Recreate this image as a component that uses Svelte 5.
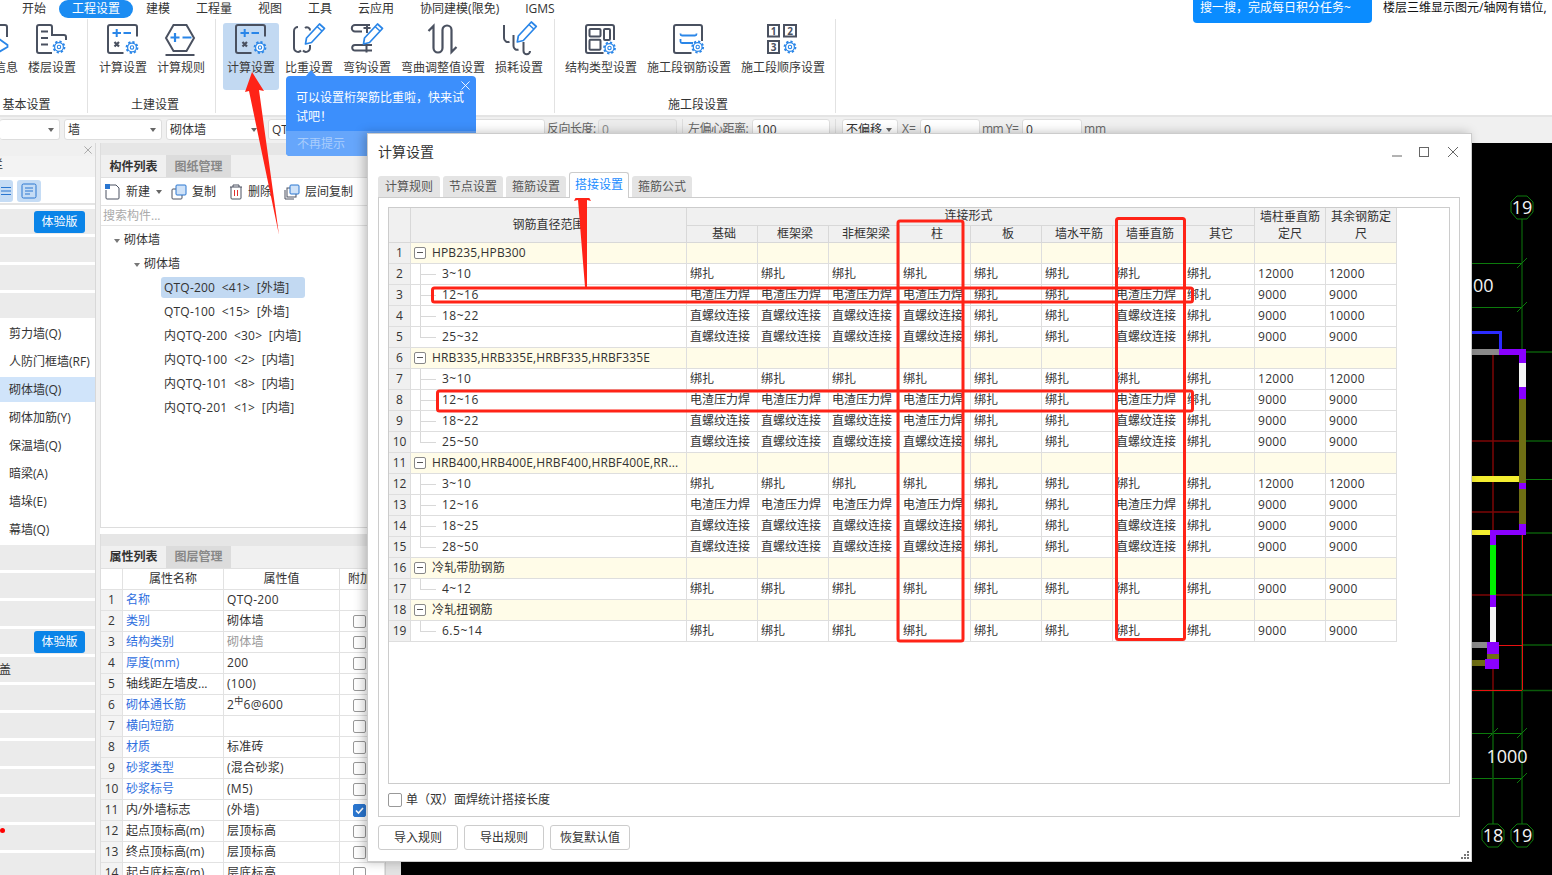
<script lang="ts">
  const menus = ['开始', '工程设置', '建模', '工程量', '视图', '工具', '云应用', '协同建模(限免)', 'IGMS'];

  const leftTop = ['trial', '', '', ''];
  const leftNames = ['剪力墙(Q)', '人防门框墙(RF)', '砌体墙(Q)', '砌体加筋(Y)', '保温墙(Q)', '暗梁(A)', '墙垛(E)', '幕墙(Q)'];
  const leftBottom = ['', '', '', 'trial', 'cover', '', '', '', '', '', 'dot', ''];

  const tree = [
    'QTQ-200  <41>  [外墙]',
    'QTQ-100  <15>  [外墙]',
    '内QTQ-200  <30>  [内墙]',
    '内QTQ-100  <2>  [内墙]',
    '内QTQ-101  <8>  [内墙]',
    '内QTQ-201  <1>  [内墙]',
  ];

  const props = [
    { name: '名称', val: 'QTQ-200', link: true, nobox: true },
    { name: '类别', val: '砌体墙', link: true },
    { name: '结构类别', val: '砌体墙', link: true, muted: true },
    { name: '厚度(mm)', val: '200', link: true },
    { name: '轴线距左墙皮...', val: '(100)' },
    { name: '砌体通长筋', val: '2', steel: true, link: true },
    { name: '横向短筋', val: '', link: true },
    { name: '材质', val: '标准砖', link: true },
    { name: '砂浆类型', val: '(混合砂浆)', link: true },
    { name: '砂浆标号', val: '(M5)', link: true },
    { name: '内/外墙标志', val: '(外墙)', checked: true },
    { name: '起点顶标高(m)', val: '层顶标高' },
    { name: '终点顶标高(m)', val: '层顶标高' },
    { name: '起点底标高(m)', val: '层底标高' },
  ];

  const heads = ['基础', '框架梁', '非框架梁', '柱', '板', '墙水平筋', '墙垂直筋', '其它'];
  const T = '绑扎';
  const E = '电渣压力焊';
  const S = '直螺纹连接';
  const allTie = [T, T, T, T, T, T, T, T];
  const weld = [E, E, E, E, T, T, E, T];
  const screw = [S, S, S, S, T, T, S, T];

  const rows: any[] = [
    { group: 'HPB235,HPB300' },
    { label: '3~10', c: allTie, a: 12000, b: 12000 },
    { label: '12~16', c: weld, a: 9000, b: 9000 },
    { label: '18~22', c: screw, a: 9000, b: 10000 },
    { label: '25~32', c: screw, a: 9000, b: 9000, last: true },
    { group: 'HRB335,HRB335E,HRBF335,HRBF335E' },
    { label: '3~10', c: allTie, a: 12000, b: 12000 },
    { label: '12~16', c: weld, a: 9000, b: 9000 },
    { label: '18~22', c: [S, S, S, E, T, T, S, T], a: 9000, b: 9000 },
    { label: '25~50', c: screw, a: 9000, b: 9000, last: true },
    { group: 'HRB400,HRB400E,HRBF400,HRBF400E,RR...' },
    { label: '3~10', c: allTie, a: 12000, b: 12000 },
    { label: '12~16', c: weld, a: 9000, b: 9000 },
    { label: '18~25', c: screw, a: 9000, b: 9000 },
    { label: '28~50', c: screw, a: 9000, b: 9000, last: true },
    { group: '冷轧带肋钢筋' },
    { label: '4~12', c: allTie, a: 9000, b: 9000, last: true },
    { group: '冷轧扭钢筋' },
    { label: '6.5~14', c: allTie, a: 9000, b: 9000, last: true },
  ];

  const dialogTabs = ['计算规则', '节点设置', '箍筋设置', '搭接设置', '箍筋公式'];
</script>

{#snippet gear(x, y)}
  <circle cx={x} cy={y} r="5.4" fill="none" stroke="#2a86e8" stroke-width="2" stroke-dasharray="2.2 2" />
  <circle cx={x} cy={y} r="4.400" fill="#fff" stroke="#2a86e8" stroke-width="1.200" />
  <circle cx={x} cy={y} r="1.700" fill="none" stroke="#2a86e8" stroke-width="1.100" />
{/snippet}

{#snippet pencil(x, y)}
  <path d="M{x} {y}l1-6 13-14 5 4.500-13 14z" fill="#fff" stroke="#2a86e8" stroke-width="1.700" stroke-linejoin="round" />
  <path d="M{x + 11.500} {y - 17.500}l5 4.500" stroke="#2a86e8" stroke-width="1.500" fill="none" />
{/snippet}

{#snippet iconInfo()}
  <svg viewBox="0 0 32 34" class="ico">
    <path d="M20 1h7a2 2 0 0 1 2 2v10" class="ln" />
    <path d="M21 15l8.500 6v2L21 28" fill="none" stroke="#2a86e8" stroke-width="1.800" />
  </svg>
{/snippet}

{#snippet iconFloor()}
  <svg viewBox="0 0 32 34" class="ico">
    <path d="M16 29H3a2 2 0 0 1-2-2V3a2 2 0 0 1 2-2h11a2 2 0 0 1 2 2v8h12a2 2 0 0 1 2 2v3" class="ln" />
    <path d="M5 7.500h7M5 14h7M5 20.500h7" class="ln" />
    {@render gear(23, 23)}
  </svg>
{/snippet}

{#snippet iconCalc()}
  <svg viewBox="0 0 32 34" class="ico">
    <path d="M16.500 29H3a2 2 0 0 1-2-2V3a2 2 0 0 1 2-2h25a2 2 0 0 1 2 2v9.500" class="ln" />
    <path d="M5.500 9h8.500M9.700 5v8M16.500 9h7.500" fill="none" stroke="#2a86e8" stroke-width="2" />
    <path d="M7.500 18l4.500 4.500M12 18l-4.500 4.500" fill="none" stroke="#4a5160" stroke-width="2.200" />
    {@render gear(25, 23.500)}
  </svg>
{/snippet}

{#snippet iconRule()}
  <svg viewBox="0 0 32 34" class="ico">
    <path d="M1 14L8.500 1h13L29 14l-7.500 13h-13z" class="ln" />
    <path d="M5.500 13.500h9M10 9v9M17.500 13.500h9" fill="none" stroke="#2a86e8" stroke-width="2.200" />
    <path d="M0.500 31h29" class="ln" />
  </svg>
{/snippet}

{#snippet iconDensity()}
  <svg viewBox="0 0 32 34" class="ico">
    <path d="M5 3a4 4 0 0 0-4 4v17a4 4 0 0 0 7 2.500" class="ln" />
    <path d="M12 4a3 3 0 0 1 5 2.500M17 21v3a4 4 0 0 1-7 2.500" class="ln" />
    {@render pencil(12.500, 20)}
  </svg>
{/snippet}

{#snippet iconHook()}
  <svg viewBox="0 0 32 34" class="ico">
    <path d="M19 1H4a3.200 3.200 0 0 0 0 6.400h7" class="ln" />
    <path d="M16 1v8M12.500 4h7" class="ln" />
    <path d="M21 21H4a2.800 2.800 0 0 0 0 5.600h17M15.500 21v7.500" class="ln" />
    {@render pencil(12.500, 20)}
  </svg>
{/snippet}

{#snippet iconBend()}
  <svg viewBox="0 0 32 34" class="ico">
    <path d="M1.500 7L6.500 2V24a4.500 4.500 0 0 0 9 0V6a4.500 4.500 0 0 1 9 0V28l5-5" fill="none" stroke="#4a5160" stroke-width="2.200" />
  </svg>
{/snippet}

{#snippet iconLoss()}
  <svg viewBox="0 0 32 34" class="ico">
    <path d="M1 1v13a4 4 0 0 0 5.500 3.700" class="ln" />
    <path d="M10.500 11v11a3.700 3.700 0 0 0 5 3.500" class="ln" />
    <path d="M20.500 18v9a3.200 3.200 0 0 0 6.500 0" class="ln" />
    {@render pencil(14.300, 18)}
  </svg>
{/snippet}

{#snippet iconStruct()}
  <svg viewBox="0 0 32 34" class="ico">
    <path d="M18.500 29H3a2 2 0 0 1-2-2V3a2 2 0 0 1 2-2h24a2 2 0 0 1 2 2v13" class="ln" />
    <rect x="4.500" y="5" width="11" height="7.500" rx="1" class="ln" />
    <rect x="19" y="5" width="6" height="11" rx="1" class="ln" />
    <rect x="4.500" y="15.700" width="11" height="10" rx="1" class="ln" />
    {@render gear(24.500, 24)}
  </svg>
{/snippet}

{#snippet iconStage()}
  <svg viewBox="0 0 32 34" class="ico">
    <path d="M18.500 29H3a2 2 0 0 1-2-2V3a2 2 0 0 1 2-2h24a2 2 0 0 1 2 2v14" class="ln" />
    <path d="M7.500 9.500V10a1.500 1.500 0 0 0 1.500 1.500h13a1.500 1.500 0 0 0 1.500-1.500v-.5" fill="none" stroke="#2a86e8" stroke-width="1.800" />
    <path d="M7.500 15v2.500a1.500 1.500 0 0 0 1.500 1.500h11" fill="none" stroke="#2a86e8" stroke-width="1.800" />
    {@render gear(24.700, 23)}
  </svg>
{/snippet}

{#snippet iconOrder()}
  <svg viewBox="0 0 32 34" class="ico">
    <rect x="1" y="1" width="11" height="11.500" class="ln" />
    <rect x="17" y="1" width="12" height="11.500" class="ln" />
    <rect x="1" y="17" width="11" height="12" class="ln" />
    <text x="6.500" y="10.500" class="num">1</text>
    <text x="23" y="10.500" class="num">2</text>
    <text x="6.500" y="27" class="num">3</text>
    {@render gear(23, 23)}
  </svg>
{/snippet}

{#snippet rbtn(label, icon, active = false)}
  <div class="rbtn" class:active>
    {@render icon()}
    <span>{label}</span>
  </div>
{/snippet}

{#snippet bubble(x, y, label)}
  <path d="M{x - 5} {y - 11}h10l6 6v10l-6 7h-10l-6-7v-10z" fill="#000" stroke="#0c7a0c" stroke-width="1" />
  <text x={x} y={y + 6.500} class="cad-text" text-anchor="middle">{label}</text>
{/snippet}

{#snippet cross(size, color)}
  <svg viewBox="0 0 10 10" width={size} height={size} class="cross">
    <path d="M0.500 0.500l9 9M9.500 0.500l-9 9" stroke={color} fill="none" />
  </svg>
{/snippet}

<div class="page">
  <nav class="menu">
    {#each menus as m, i}
      <span class="menu-item" class:on={i === 1}>{m}</span>
    {/each}
  </nav>

  <section class="ribbon">
    <div class="rgroup g1">
      <div class="rbtns">
        {@render rbtn('工程信息', iconInfo)}
        {@render rbtn('楼层设置', iconFloor)}
      </div>
      <div class="rlabel">基本设置</div>
    </div>
    <div class="rgroup g2">
      <div class="rbtns">
        {@render rbtn('计算设置', iconCalc)}
        {@render rbtn('计算规则', iconRule)}
      </div>
      <div class="rlabel">土建设置</div>
    </div>
    <div class="rgroup g3">
      <div class="rbtns">
        {@render rbtn('计算设置', iconCalc, true)}
        {@render rbtn('比重设置', iconDensity)}
        {@render rbtn('弯钩设置', iconHook)}
        {@render rbtn('弯曲调整值设置', iconBend)}
        {@render rbtn('损耗设置', iconLoss)}
      </div>
      <div class="rlabel"></div>
    </div>
    <div class="rgroup g4">
      <div class="rbtns">
        {@render rbtn('结构类型设置', iconStruct)}
        {@render rbtn('施工段钢筋设置', iconStage)}
        {@render rbtn('施工段顺序设置', iconOrder)}
      </div>
      <div class="rlabel">施工段设置</div>
    </div>
  </section>

  <section class="toolbar">
    <div class="combo c1"><i class="caret"></i></div>
    <div class="combo c2">墙<i class="caret"></i></div>
    <div class="combo c3">砌体墙<i class="caret"></i></div>
    <div class="combo c4">QTQ-200</div>
    <span class="tl l1">反向长度:</span>
    <div class="field f1 grey">0</div>
    <i class="vsep"></i>
    <span class="tl l2">左偏心距离:</span>
    <div class="field f2">100</div>
    <i class="vsep"></i>
    <div class="combo c5">不偏移<i class="caret"></i></div>
    <span class="tl l3">X=</span>
    <div class="field f3">0</div>
    <span class="tl l4">mm Y=</span>
    <div class="field f3">0</div>
    <span class="tl l5">mm</span>
  </section>

  <div class="main">
    <aside class="left">
      <div class="left-head">{@render cross(8, '#999')}</div>
      <div class="left-title">栏</div>
      <div class="left-tools">
        <span class="lbtn b0">
          <svg viewBox="0 0 12 12" width="12" height="12"><path d="M0 2.500h10M0 6h10M0 9.500h10" stroke="#2a76d0" fill="none" /></svg>
        </span>
        <span class="lbtn b1">
          <svg viewBox="0 0 16 16" width="16" height="16">
            <rect x="1" y="1" width="14" height="14" rx="1.500" fill="none" stroke="#2a76d0" />
            <path d="M4 5h8M4 8h8M4 11h5" stroke="#2a76d0" fill="none" />
          </svg>
        </span>
      </div>
      <div class="left-list">
        {#each leftTop as r}
          <div class="lrow blank">
            {#if r === 'trial'}<span class="trial">体验版</span>{/if}
          </div>
        {/each}
        {#each leftNames as n, i}
          <div class="lrow" class:sel={i === 2}>{n}</div>
        {/each}
        {#each leftBottom as r}
          <div class="lrow blank">
            {#if r === 'trial'}<span class="trial">体验版</span>{/if}
            {#if r === 'cover'}<span class="cut">盖</span>{/if}
            {#if r === 'dot'}<i class="dot"></i>{/if}
          </div>
        {/each}
      </div>
    </aside>

    <section class="mid">
      <div class="panel top">
        <div class="strip"></div>
        <div class="tabs">
          <span class="tab on">构件列表</span>
          <span class="tab">图纸管理</span>
        </div>
        <div class="mtools">
          <svg viewBox="0 0 15 16" width="15" height="16" class="t0">
            <path d="M3 1h8l3 3v10a1 1 0 0 1-1 1H2a1 1 0 0 1-1-1V6" fill="none" stroke="#4a5160" />
            <rect x="0" y="0" width="5" height="5" fill="#2a76d0" />
          </svg>
          <span class="mt">新建</span>
          <i class="caret small"></i>
          <svg viewBox="0 0 16 16" width="16" height="16" class="t1">
            <rect x="1" y="5" width="10" height="10" rx="1" fill="#fff" stroke="#4a5160" />
            <rect x="5" y="1" width="10" height="10" rx="1" fill="#cfe2f8" stroke="#2a76d0" />
          </svg>
          <span class="mt">复制</span>
          <svg viewBox="0 0 14 16" width="14" height="16" class="t2">
            <path d="M1 3h12M4 3V1h6v2M2 3v11a1 1 0 0 0 1 1h8a1 1 0 0 0 1-1V3" fill="none" stroke="#4a5160" />
            <path d="M5.500 6v6M8.500 6v6" stroke="#e03030" fill="none" />
          </svg>
          <span class="mt">删除</span>
          <svg viewBox="0 0 16 16" width="16" height="16" class="t3">
            <path d="M1 6v9h9" fill="none" stroke="#4a5160" />
            <rect x="3" y="4" width="9" height="9" fill="#fff" stroke="#4a5160" />
            <rect x="6" y="1" width="9" height="9" rx="1" fill="#cfe2f8" stroke="#2a76d0" />
          </svg>
          <span class="mt">层间复制</span>
        </div>
        <div class="search">搜索构件...</div>
        <div class="tree">
          <div class="node n0"><i class="tri"></i>砌体墙</div>
          <div class="node n1"><i class="tri"></i>砌体墙</div>
          {#each tree as t, i}
            <div class="node leaf"><span class:picked={i === 0}>{t}</span></div>
          {/each}
        </div>
      </div>

      <div class="panel bottom">
        <div class="strip"></div>
        <div class="tabs">
          <span class="tab on">属性列表</span>
          <span class="tab">图层管理</span>
        </div>
        <table class="props">
          <thead>
            <tr><th class="pn"></th><th class="pname">属性名称</th><th class="pval">属性值</th><th class="pext">附加</th></tr>
          </thead>
          <tbody>
            {#each props as p, i}
              <tr>
                <td class="pn">{i + 1}</td>
                <td class:link={p.link}>{p.name}</td>
                <td class="pv" class:muted={p.muted}>{p.val}{#if p.steel}<sup>中</sup>6@600{/if}</td>
                <td class="pcheck">
                  {#if !p.nobox}
                    <i class="box" class:checked={p.checked}>
                      {#if p.checked}
                        <svg viewBox="0 0 13 13" width="13" height="13"><path d="M3 6.500l2.500 2.500 4.500-5" stroke="#fff" stroke-width="1.600" fill="none" /></svg>
                      {/if}
                    </i>
                  {/if}
                </td>
              </tr>
            {/each}
          </tbody>
        </table>
      </div>
    </section>

    <div class="splitter"></div>

    <div class="canvas">
      <svg viewBox="401 143 1151 732" width="1151" height="732">
        <g fill="none" stroke="#0c7a0c" stroke-width="1">
          <path d="M1522 218V832" />
          <path d="M1472 263.500H1522M1472 307.500H1522" />
          <path d="M1517 268l10-10M1517 312l10-10" />
          <path d="M1472 733.500H1522M1472 778.500H1522" />
          <path d="M1488 738l10-10M1517 738l10-10M1517 783l10-10" />
          <path d="M1522 479.500H1552" />
        </g>
        <g fill="none" stroke="#0a5a0a" stroke-width="1.500">
          <path d="M1493 690V825" />
          <path d="M1522 352H1552M1522 441H1552M1522 533H1552M1522 595H1552M1522 645H1552M1472 690.500H1552" />
        </g>
        <g fill="none" stroke="#7d0606" stroke-width="1.500">
          <path d="M1493 355V690" />
          <path d="M1472 441H1522M1472 512H1522M1472 595H1522" />
        </g>
        <g fill="none" stroke="#e81010" stroke-width="1">
          <path d="M1522.500 535V690M1499 645.500H1522M1472 690.500H1522" />
        </g>
        <path d="M1472 332.500H1500.500V350" fill="none" stroke="#2b2bff" stroke-width="3" />
        <rect x="1472" y="349" width="27" height="6" fill="#8a8a8a" />
        <rect x="1499" y="349" width="27" height="6" fill="#8a00ff" />
        <rect x="1519" y="349" width="7" height="14" fill="#8a00ff" />
        <rect x="1519" y="363" width="7" height="24" fill="#f4f4f4" />
        <rect x="1519" y="387" width="7" height="12" fill="#8a00ff" />
        <rect x="1519" y="399" width="7" height="84" fill="#6e6e14" />
        <rect x="1519" y="483" width="7" height="6" fill="#8a00ff" />
        <rect x="1519" y="489" width="7" height="35" fill="#6e6e14" />
        <rect x="1519" y="524" width="7" height="11" fill="#8a00ff" />
        <rect x="1490" y="530" width="36" height="5" fill="#8a00ff" />
        <rect x="1472" y="476" width="47" height="6" fill="#f4ee30" />
        <rect x="1472" y="530" width="18" height="5" fill="#f4ee30" />
        <rect x="1490" y="530" width="6" height="15" fill="#8a00ff" />
        <rect x="1490" y="545" width="6" height="50" fill="#00f000" />
        <rect x="1490" y="595" width="6" height="12" fill="#8a00ff" />
        <rect x="1490" y="607" width="6" height="35" fill="#f4f4f4" />
        <rect x="1472" y="642" width="15" height="6" fill="#8a8a8a" />
        <rect x="1472" y="660" width="14" height="6" fill="#6e6e14" />
        <rect x="1487" y="654" width="12" height="6" fill="#6e6e14" />
        <rect x="1487" y="642" width="12" height="12" fill="#8a00ff" />
        <rect x="1485" y="659" width="14" height="10" fill="#8a00ff" />
        {@render bubble(1522, 207, '19')}
        {@render bubble(1493, 835, '18')}
        {@render bubble(1522, 835, '19')}
        <text x="1473" y="292" class="cad-text">00</text>
        <text x="1507" y="763" class="cad-text" text-anchor="middle">1000</text>
      </svg>
    </div>
  </div>

  <!-- floating things, in paint order -->
  <div class="search-tag">搜一搜，完成每日积分任务~</div>
  <div class="notice">楼层三维显示图元/轴网有错位,</div>

  <div class="tip">
    <i class="tip-caret"></i>
    <span class="tip-x">{@render cross(9, '#fff')}</span>
    <p>可以设置桁架筋比重啦，快来试试吧！</p>
    <div class="tip-foot">不再提示</div>
  </div>

  <div class="dialog">
    <header class="dlg-title">
      <span>计算设置</span>
      <svg viewBox="0 0 72 14" width="72" height="14" class="winctl">
        <path d="M2 10h10" stroke="#666" fill="none" />
        <rect x="29.500" y="1.500" width="9" height="9" stroke="#666" fill="none" />
        <path d="M58 1l10 10M68 1L58 11" stroke="#666" fill="none" />
      </svg>
    </header>
    <div class="dlg-tabs">
      {#each dialogTabs as t, i}
        <span class="dtab" class:on={i === 3}>{t}</span>
      {/each}
    </div>
    <div class="pane">
      <div class="grid-box">
        <table class="grid">
          <colgroup>
            <col class="c-n" />
            <col class="c-r" />
            {#each Array(10) as _}<col class="c-v" />{/each}
          </colgroup>
          <thead>
            <tr class="h1">
              <th rowspan="2"></th>
              <th rowspan="2">钢筋直径范围</th>
              <th colspan="8" class="span">连接形式</th>
              <th rowspan="2" class="wrap">墙柱垂直筋定尺</th>
              <th rowspan="2" class="wrap">其余钢筋定尺</th>
            </tr>
            <tr class="h2">
              {#each heads as h}<th>{h}</th>{/each}
            </tr>
          </thead>
          <tbody>
            {#each rows as r, i}
              <tr class:grp={r.group}>
                <td class="n">{i + 1}</td>
                {#if r.group}
                  <td class="range"><i class="minus"></i>{r.group}</td>
                  {#each Array(10) as _}<td></td>{/each}
                {:else}
                  <td class="range child" class:last={r.last}>{r.label}</td>
                  {#each r.c as c}<td>{c}</td>{/each}
                  <td class="len">{r.a}</td>
                  <td class="len">{r.b}</td>
                {/if}
              </tr>
            {/each}
          </tbody>
        </table>
      </div>
      <label class="weld"><i class="box big"></i>单（双）面焊统计搭接长度</label>
    </div>
    <footer class="dlg-foot">
      <button>导入规则</button>
      <button>导出规则</button>
      <button>恢复默认值</button>
    </footer>
    <svg viewBox="0 0 9 9" width="9" height="9" class="grip">
      <path d="M6 0h2v2H6zM3 3h2v2H3zM6 3h2v2H6zM0 6h2v2H0zM3 6h2v2H3zM6 6h2v2H6z" fill="#777" />
    </svg>
  </div>

  <!-- red review marks drawn over the screenshot -->
  <svg class="marks" viewBox="0 0 1552 875" width="1552" height="875">
    <g fill="none" stroke="#ff2317" stroke-width="3">
      <rect x="898" y="221" width="65" height="420" rx="2" />
      <rect x="1116.500" y="218.500" width="68" height="421" rx="2" />
      <rect x="432.500" y="288" width="760" height="14" rx="2" />
      <rect x="437.500" y="391" width="755" height="20" rx="2" />
    </g>
    <polygon points="252,72 264,91 259,90 279,235 249,91 245,92" fill="#ff2317" />
    <polygon points="582,185 591,201 587,200 587,287 585,287 578,200 574,201" fill="#ff2317" />
  </svg>
</div>

<style>
  :global(body) {
    margin: 0;
    overflow: hidden;
    background: #000;
  }

  .page {
    position: relative;
    width: 1552px;
    height: 875px;
    overflow: hidden;
    background: #f0f0f0;
    color: #333;
    font: 12px/16px "Open Sans", "Noto Sans CJK SC", sans-serif;
    display: flex;
    flex-direction: column;
  }

  /* menu */
  .menu {
    display: flex;
    height: 18px;
    padding-left: 9px;
    background: #fff;
    align-items: center;
    flex: none;
  }
  .menu-item {
    padding: 0 13px;
    line-height: 18px;
  }
  .menu-item.on {
    background: #1b8cf2;
    color: #fff;
    border-radius: 9px;
  }

  /* ribbon */
  .ribbon {
    display: flex;
    height: 99px;
    flex: none;
    background: #fff;
    border-bottom: 2px solid #e4e4e4;
    box-sizing: border-box;
    overflow: hidden;
  }
  .rgroup {
    position: relative;
    box-sizing: border-box;
    padding: 4px 0 0 7px;
    height: 94px;
    margin-top: 1px;
    border-right: 1px solid #e2e2e2;
    flex: none;
  }
  .g1 { width: 129px; margin-left: -41px; }
  .g2 { width: 128px; }
  .g3 { width: 339px; }
  .g4 { width: 281px; padding-left: 6px; }
  .rbtns {
    display: flex;
    gap: 2px;
    height: 67px;
  }
  .rbtn {
    display: flex;
    flex-direction: column;
    align-items: center;
    padding: 1px 4px 0;
    min-width: 48px;
    border-radius: 3px;
    color: #3a3a3a;
    white-space: nowrap;
  }
  .rbtn.active {
    background: #c2d9f2;
  }
  .rbtn span {
    margin-top: 2px;
  }
  .ico {
    width: 32px;
    height: 34px;
    flex: none;
    overflow: visible;
  }
  .ln {
    fill: none;
    stroke: #4a5160;
    stroke-width: 2;
  }
  .num {
    font: 700 10px "Open Sans", sans-serif;
    fill: #4a5160;
    text-anchor: middle;
  }
  .rlabel {
    margin-top: 8px;
    text-align: center;
    line-height: 14px;
    height: 14px;
  }

  /* property bar */
  .toolbar {
    display: flex;
    align-items: center;
    height: 26px;
    flex: none;
    padding-bottom: 2px;
    box-sizing: border-box;
    white-space: nowrap;
  }
  .combo, .field {
    position: relative;
    box-sizing: border-box;
    height: 21px;
    line-height: 20px;
    padding-left: 3px;
    background: #fff;
    border: 1px solid #ddd;
    border-radius: 3px;
    flex: none;
  }
  .c1 { width: 60px; border-left: 0; }
  .c2 { width: 98px; margin-left: 4px; }
  .c3 { width: 97px; margin-left: 4px; }
  .c4 { width: 277px; margin-left: 5px; }
  .c5 { width: 56px; margin-left: 6px; }
  .f1 { width: 79px; }
  .f1.grey { background: #ececec; color: #888; }
  .f2 { width: 78px; }
  .f3 { width: 60px; }
  .tl { color: #666; flex: none; }
  .l1 { width: 51px; margin-left: 2px; letter-spacing: -0.5px; }
  .l2 { width: 64px; margin-left: 5px; letter-spacing: -0.5px; }
  .l3 { width: 18px; margin-left: 4px; }
  .l4 { width: 40px; margin-left: 2px; letter-spacing: -0.5px; }
  .l5 { margin-left: 2px; }
  .vsep { width: 1px; height: 20px; background: #ddd; margin-left: 5px; flex: none; }
  .caret {
    position: absolute;
    right: 5px;
    top: 8px;
    border: 3px solid transparent;
    border-top: 4px solid #666;
  }

  /* work area */
  .main {
    display: flex;
    flex: 1;
    min-height: 0;
  }

  .left {
    width: 95px;
    flex: none;
    background: #fff;
    border-right: 1px solid #d8d8d8;
    box-sizing: content-box;
    margin-right: 4px;
    overflow: hidden;
  }
  .left-head {
    height: 13px;
    background: #f0f0f0;
    display: flex;
    justify-content: flex-end;
    align-items: center;
    padding-right: 3px;
  }
  .cross { display: block; }
  .left-title {
    height: 21px;
    background: #f3f3f3;
    margin-left: -9px;
    line-height: 18px;
  }
  .left-tools {
    display: flex;
    gap: 4px;
    height: 28px;
    box-sizing: border-box;
    padding-top: 3px;
    border-bottom: 2px solid #e4e4e4;
  }
  .lbtn {
    display: flex;
    align-items: center;
    justify-content: center;
    height: 22px;
    background: #c5dcf5;
    border-radius: 3px;
  }
  .b0 { width: 13px; justify-content: flex-end; border-radius: 0 3px 3px 0; overflow: hidden; }
  .b1 { width: 24px; }
  .left-list {
    padding-top: 2px;
  }
  .lrow {
    height: 28px;
    box-sizing: border-box;
    line-height: 26px;
    padding-left: 9px;
    border-top: 2px solid #fff;
    border-bottom: 1px solid #fff;
    white-space: nowrap;
  }
  .lrow.blank {
    background: #ebebeb;
    padding-left: 0;
    display: flex;
    align-items: center;
  }
  .lrow.sel {
    background: #d0e4fa;
  }
  .trial {
    width: 51px;
    height: 22px;
    margin-left: 34px;
    background: #0a84e8;
    color: #fff;
    border-radius: 3px;
    text-align: center;
    line-height: 21px;
  }
  .cut {
    margin-left: -1px;
  }
  .dot {
    width: 5px;
    height: 5px;
    border-radius: 50%;
    background: #f00;
    margin: -15px 0 0 0;
  }

  .mid {
    width: 285px;
    flex: none;
    display: flex;
    flex-direction: column;
    background: #fff;
  }
  .panel {
    display: flex;
    flex-direction: column;
    border-left: 1px solid #ddd;
  }
  .panel.top {
    height: 385px;
    flex: none;
    border-bottom: 1px solid #ddd;
    box-sizing: border-box;
  }
  .panel.bottom {
    margin-top: 6px;
    flex: 1;
    min-height: 0;
  }
  .strip {
    height: 12px;
    flex: none;
    background: #e6e6e6;
  }
  .tabs {
    display: flex;
    height: 22px;
    flex: none;
    background: #f0f0f0;
    border-bottom: 1px solid #e0e0e0;
  }
  .tab {
    width: 65px;
    text-align: center;
    line-height: 22px;
    background: #dcdcdc;
    color: #888;
    font-weight: 700;
    box-sizing: border-box;
  }
  .top .tab {
    line-height: 24px;
  }
  .tab.on {
    background: #f0f0f0;
    color: #333;
  }
  .mtools {
    display: flex;
    align-items: center;
    height: 28px;
    flex: none;
    border-bottom: 1px solid #e4e4e4;
    box-sizing: border-box;
    white-space: nowrap;
  }
  .t0 { margin-left: 4px; }
  .t1 { margin-left: 0; }
  .t2 { margin-left: 13px; }
  .t3 { margin-left: 12px; }
  .mt { margin-left: 5px; }
  .t0 + .mt { margin-left: 6px; }
  .caret.small {
    position: static;
    margin: 4px 9px 0 6px;
    display: block;
  }
  .search {
    height: 20px;
    flex: none;
    line-height: 20px;
    padding-left: 2px;
    color: #aaa;
    border-bottom: 1px solid #e4e4e4;
    box-sizing: border-box;
  }
  .tree {
    padding-top: 2px;
  }
  .node {
    height: 24px;
    line-height: 24px;
    white-space: pre;
    display: flex;
    align-items: center;
  }
  .n0 { padding-left: 13px; }
  .n1 { padding-left: 33px; }
  .leaf { padding-left: 60px; }
  .leaf span {
    padding: 0 3px;
    margin-top: -2px;
    line-height: 21px;
    border-radius: 3px;
    min-width: 138px;
    letter-spacing: 0.2px;
  }
  .leaf .picked {
    background: #c2d9f2;
  }
  .tri {
    border: 3px solid transparent;
    border-top: 4px solid #777;
    margin: 4px 4px 0 0;
  }

  .props {
    border-collapse: separate;
    border-spacing: 0;
    table-layout: fixed;
    width: 284px;
    background: #fff;
  }
  .props th, .props td {
    height: 21px;
    box-sizing: border-box;
    padding: 0 3px;
    font-weight: 400;
    border-right: 1px solid #e2e2e2;
    border-bottom: 1px solid #e2e2e2;
    white-space: nowrap;
    overflow: hidden;
    line-height: 20px;
  }
  .props th { text-align: center; }
  .pn { width: 22px; text-align: center; background: #f3f3f3; }
  .props th.pn { background: #fff; }
  .pname { width: 101px; }
  .pval { width: 116px; }
  .pext { text-align: left !important; padding-left: 8px !important; }
  .pv { letter-spacing: 0.3px; }
  .link { color: #2f6fe0; }
  .muted { color: #999; }
  .props sup {
    font-size: 9px;
    line-height: 0;
  }
  .pcheck { padding-left: 13px !important; }
  .box {
    display: block;
    width: 13px;
    height: 13px;
    box-sizing: border-box;
    border: 1px solid #999;
    border-radius: 2px;
    background: #fff;
  }
  .box.checked {
    background: #2a76d0;
    border-color: #2a76d0;
  }
  .box svg { display: block; margin: -1px; }

  .splitter {
    width: 16px;
    flex: none;
    background: #e2e2e2;
    border-left: 1px solid #ccc;
    box-sizing: border-box;
  }
  .canvas {
    flex: 1;
    background: #000;
    min-width: 0;
    overflow: hidden;
  }
  .canvas svg { display: block; }
  .cad-text {
    font: 18px "Open Sans", sans-serif;
    fill: #f4f4f4;
  }

  /* overlays */
  .search-tag {
    position: absolute;
    left: 1193px;
    top: 0;
    width: 179px;
    height: 23px;
    padding-left: 7px;
    box-sizing: border-box;
    background: #0a8cff;
    color: #fff;
    line-height: 16px;
    border-radius: 0 0 4px 4px;
  }
  .notice {
    position: absolute;
    left: 1383px;
    top: 0;
    width: 169px;
    height: 16px;
    background: #fff;
    color: #111;
    white-space: nowrap;
    overflow: hidden;
  }

  .tip {
    position: absolute;
    left: 286px;
    top: 76px;
    width: 190px;
    height: 80px;
    background: #3c8ffc;
    border-radius: 4px;
    color: #fff;
    overflow: visible;
  }
  .tip p {
    margin: 0;
    padding: 12px 8px 0 10px;
    height: 55px;
    box-sizing: border-box;
    line-height: 19px;
  }
  .tip-caret {
    position: absolute;
    left: 20px;
    top: -6px;
    border: 5px solid transparent;
    border-top: 0;
    border-bottom: 6px solid #3c8ffc;
  }
  .tip-x {
    position: absolute;
    right: 6px;
    top: 5px;
  }
  .tip-foot {
    height: 25px;
    line-height: 25px;
    padding-left: 11px;
    background: #66a6fb;
    color: #a9cdfb;
    border-radius: 0 0 4px 4px;
  }

  .dialog {
    position: absolute;
    left: 367px;
    top: 133px;
    width: 1105px;
    height: 729px;
    box-sizing: border-box;
    background: #fff;
    box-shadow: inset 0 0 0 1px #ccc, -3px 0 10px rgba(0, 0, 0, 0.25);
  }
  .dlg-title {
    display: flex;
    justify-content: space-between;
    align-items: center;
    height: 39px;
    padding: 0 10px 2px 11px;
    box-sizing: border-box;
    font-size: 14px;
  }
  .winctl { margin-top: 2px; }
  .dlg-tabs {
    display: flex;
    align-items: flex-end;
    gap: 3px;
    height: 25px;
    margin-left: 11px;
  }
  .dtab {
    width: 60px;
    height: 21px;
    background: #e4e4e4;
    color: #555;
    text-align: center;
    line-height: 21px;
    border-radius: 3px 3px 0 0;
  }
  .dtab:first-child {
    width: 62px;
  }
  .dtab.on {
    height: 26px;
    line-height: 24px;
    background: #fff;
    color: #1a8cff;
    border: 1px solid #ccc;
    border-bottom: 0;
    box-sizing: border-box;
    position: relative;
    z-index: 1;
    margin-bottom: -1px;
  }
  .pane {
    width: 1082px;
    height: 620px;
    margin-left: 11px;
    box-sizing: border-box;
    border: 1px solid #ccc;
    padding: 9px;
  }
  .grid-box {
    width: 1062px;
    height: 577px;
    box-sizing: border-box;
    border: 1px solid #ccc;
    overflow: hidden;
  }
  .grid {
    border-collapse: separate;
    border-spacing: 0;
    table-layout: fixed;
    width: 1008px;
    color: #333;
  }
  .c-n { width: 22px; }
  .c-r { width: 276px; }
  .c-v { width: 71px; }
  .grid th {
    background: #f0f0f0;
    font-weight: 400;
    padding: 0;
    box-sizing: border-box;
    border-right: 1px solid #d8d8d8;
    border-bottom: 1px solid #d8d8d8;
    line-height: 16px;
  }
  .h2 th {
    padding-left: 4px;
  }
  .grid th.span {
    padding-right: 4px;
  }
  .grid th.wrap {
    padding: 0 4px;
    line-height: 17px;
  }
  .h1 { height: 16px; }
  .h2 { height: 17px; }
  .grid td {
    height: 21px;
    box-sizing: border-box;
    padding: 0 0 0 3px;
    border-right: 1px solid #dedede;
    border-bottom: 1px solid #dedede;
    line-height: 20px;
    white-space: nowrap;
    overflow: hidden;
  }
  .grid td.n {
    padding: 0;
    text-align: center;
    background: #f0f0f0;
  }
  .grp td:not(.n) {
    background: #fffce8;
  }
  .grid td.range {
    position: relative;
    padding-left: 21px;
    letter-spacing: 0.15px;
  }
  .grid td.child {
    padding-left: 31px;
    letter-spacing: 0.5px;
  }
  .grid td.len {
    letter-spacing: 0.3px;
  }
  .child::before {
    content: '';
    position: absolute;
    left: 9px;
    top: 0;
    bottom: 0;
    border-left: 1px solid #d8d8d8;
  }
  .child::after {
    content: '';
    position: absolute;
    left: 9px;
    top: 10px;
    width: 16px;
    border-top: 1px solid #d8d8d8;
  }
  .child.last::before {
    bottom: 10px;
  }
  .minus {
    position: absolute;
    left: 3px;
    top: 4px;
    width: 12px;
    height: 12px;
    box-sizing: border-box;
    border: 1px solid #888;
    border-radius: 2px;
    background: #fff;
  }
  .minus::after {
    content: '';
    position: absolute;
    left: 2px;
    right: 2px;
    top: 4px;
    border-top: 1px solid #555;
  }
  .weld {
    display: flex;
    align-items: center;
    gap: 4px;
    height: 28px;
    margin-top: 2px;
    color: #333;
  }
  .box.big { width: 14px; height: 14px; }
  .dlg-foot {
    display: flex;
    gap: 6px;
    margin: 8px 0 0 11px;
  }
  .dlg-foot button {
    width: 80px;
    height: 25px;
    padding: 0;
    background: #fff;
    border: 1px solid #ccc;
    border-radius: 3px;
    font: inherit;
    color: #333;
  }
  .grip {
    position: absolute;
    right: 2px;
    bottom: 2px;
  }
  .marks {
    position: absolute;
    left: 0;
    top: 0;
    pointer-events: none;
  }
</style>
